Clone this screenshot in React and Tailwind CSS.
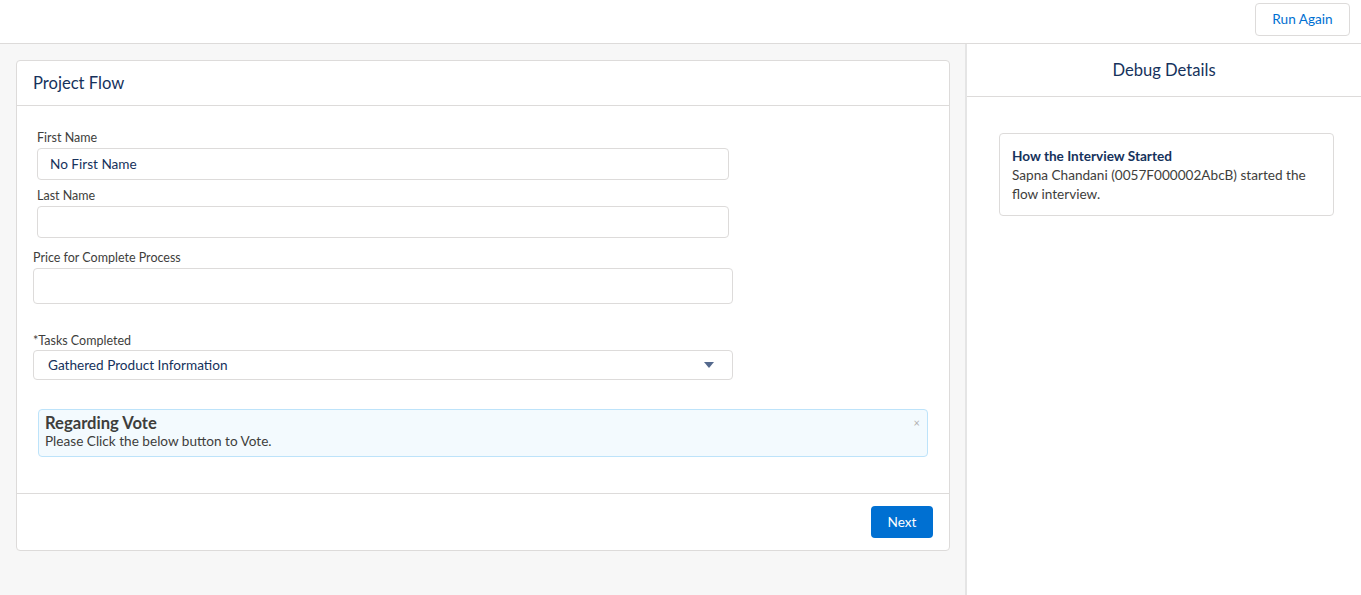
export default function App() {
  return (
    <div className="w-[1361px] h-[595px] flex flex-col bg-white text-[#080707] overflow-hidden" style={{ fontFamily: "Lato, 'Open Sans', sans-serif" }}>
      {/* Top bar */}
      <div className="h-[44px] shrink-0 flex items-start justify-end pt-[3px] pr-[11px] border-b border-[#dddbda] bg-white">
        <button className="w-[95px] h-[33px] rounded-[4px] border border-[#dddbda] bg-white text-[#0070d2] text-[13.6px]">
          Run Again
        </button>
      </div>

      <div className="flex flex-1 min-h-0">
        {/* Left canvas */}
        <div className="w-[967px] shrink-0 bg-[#f7f7f7] border-r-2 border-[#e5e5e5] pt-[16px] pl-[16px]">
          <div className="w-[934px] bg-white border border-[#dddbda] rounded-[4px]">
            <div className="h-[45px] flex items-center px-[16px] border-b border-[#dddbda] text-[16.6px] text-[#16325c]">
              Project Flow
            </div>

            <div className="pt-[24px] pb-[36px]">
              <div className="pl-[20px]">
                <div className="text-[12.5px] text-[#3e3e3c] leading-[16px] mb-[2px]">First Name</div>
                <div className="w-[692px] h-[32px] border border-[#dddbda] rounded-[4px] flex items-center px-[12px] text-[13.6px] text-[#16325c]">
                  No First Name
                </div>
                <div className="text-[12.5px] text-[#3e3e3c] leading-[16px] mt-[8px] mb-[2px]">Last Name</div>
                <div className="w-[692px] h-[32px] border border-[#dddbda] rounded-[4px]"></div>
              </div>

              <div className="pl-[16px] mt-[12px]">
                <div className="text-[12.5px] text-[#3e3e3c] leading-[16px] mb-[2px]">Price for Complete Process</div>
                <div className="w-[700px] h-[36px] border border-[#dddbda] rounded-[4px]"></div>

                <div className="text-[12.5px] text-[#3e3e3c] leading-[16px] mt-[29px] mb-[1px]">*Tasks Completed</div>
                <div className="w-[700px] h-[30px] border border-[#dddbda] rounded-[4px] flex items-center justify-between pl-[14px] pr-[18px] text-[13.6px] text-[#16325c]">
                  <span>Gathered Product Information</span>
                  <svg width="10" height="6" viewBox="0 0 10 6"><path d="M0 0h10L5 6z" fill="#54698d" /></svg>
                </div>
              </div>

              <div className="ml-[21px] mt-[29px] w-[890px] h-[48px] bg-[#f3fafe] border border-[#bde3fa] rounded-[4px] relative px-[6px] pt-[3px]">
                <div className="text-[16.6px] font-bold text-[#3e3e3c] leading-[20px]">Regarding Vote</div>
                <div className="text-[13.6px] text-[#3e3e3c] leading-[16px]">Please Click the below button to Vote.</div>
                <span className="absolute right-[7px] top-[5px] text-[11px] text-[#b0b0b0]">×</span>
              </div>
            </div>

            <div className="border-t border-[#dddbda] h-[57px] flex items-start justify-end pt-[12px] pr-[16px]">
              <button className="w-[62px] h-[32px] rounded-[4px] bg-[#0070d2] text-white text-[13.6px]">Next</button>
            </div>
          </div>
        </div>

        {/* Debug panel */}
        <div className="flex-1 bg-white">
          <div className="h-[53px] flex items-center justify-center border-b border-[#dddbda] text-[16.6px] text-[#16325c]">
            Debug Details
          </div>
          <div className="pt-[36px] pl-[32px]">
            <div className="w-[335px] h-[83px] border border-[#dddbda] rounded-[4px] px-[12px] pt-[13px] text-[13.6px] leading-[19px] text-[#3e3e3c]">
              <div className="font-bold text-[#16325c]">How the Interview Started</div>
              <div>Sapna Chandani (0057F000002AbcB) started the flow interview.</div>
            </div>
          </div>
        </div>
      </div>
    </div>
  );
}
